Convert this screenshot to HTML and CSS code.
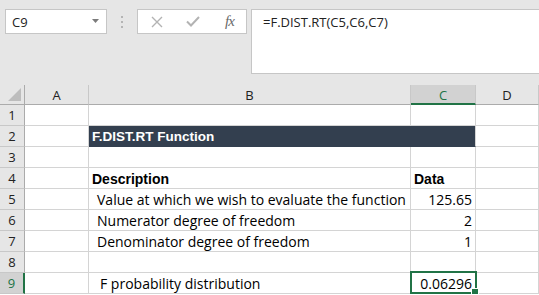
FILE: index.html
```html
<!DOCTYPE html>
<html lang="en">
<head>
    <meta charset="UTF-8">
    <title>F.DIST.RT Function</title>
    <link rel="stylesheet" href="styles.css">
</head>
<body>
    <div class="toolbar">
        <div class="name-box">
            <span>C9</span>
            <svg width="8" height="5" viewBox="0 0 8 5"><path d="M0 0h7L3.5 4z" fill="#7b7b7b"/></svg>
        </div>
        <div class="grip">
            <svg width="3" height="12" viewBox="0 0 3 12"><rect x="0" y="0" width="2" height="2" fill="#b4b4b4"/><rect x="0" y="5" width="2" height="2" fill="#b4b4b4"/><rect x="0" y="10" width="2" height="2" fill="#b4b4b4"/></svg>
        </div>
        <div class="fx-box">
            <svg class="icon" width="12" height="12" viewBox="0 0 12 12"><path d="M1 1l10 10M11 1L1 11" stroke="#b3b3b3" stroke-width="1.4" fill="none"/></svg>
            <svg class="icon" width="14" height="11" viewBox="0 0 14 11"><path d="M1 5.5l4 4L13 1" stroke="#b3b3b3" stroke-width="2" fill="none"/></svg>
            <span class="fx">fx</span>
        </div>
        <div class="formula">=F.DIST.RT(C5,C6,C7)</div>
    </div>

    <div class="sheet">
        <div class="corner"><svg width="13" height="13" viewBox="0 0 13 13"><path d="M13 0V13H0z" fill="#bdbdbd"/></svg></div>
        <div class="col-head">A</div>
        <div class="col-head">B</div>
        <div class="col-head active">C</div>
        <div class="col-head">D</div>

        <div class="row-head">1</div>
        <div class="cell"></div><div class="cell"></div><div class="cell"></div><div class="cell"></div>

        <div class="row-head">2</div>
        <div class="cell"></div>
        <div class="cell title">F.DIST.RT Function</div>
        <div class="cell"></div>

        <div class="row-head">3</div>
        <div class="cell"></div><div class="cell"></div><div class="cell"></div><div class="cell"></div>

        <div class="row-head">4</div>
        <div class="cell"></div>
        <div class="cell bold">Description</div>
        <div class="cell bold">Data</div>
        <div class="cell"></div>

        <div class="row-head">5</div>
        <div class="cell"></div>
        <div class="cell indent">Value at which we wish to evaluate the function</div>
        <div class="cell num">125.65</div>
        <div class="cell"></div>

        <div class="row-head">6</div>
        <div class="cell"></div>
        <div class="cell indent">Numerator degree of freedom</div>
        <div class="cell num">2</div>
        <div class="cell"></div>

        <div class="row-head">7</div>
        <div class="cell"></div>
        <div class="cell indent">Denominator degree of freedom</div>
        <div class="cell num">1</div>
        <div class="cell"></div>

        <div class="row-head">8</div>
        <div class="cell"></div><div class="cell"></div><div class="cell"></div><div class="cell"></div>

        <div class="row-head active">9</div>
        <div class="cell"></div>
        <div class="cell indent-more">F probability distribution</div>
        <div class="cell num selected">0.06296</div>
        <div class="cell"></div>
    </div>
</body>
</html>
```

FILE: styles.css
```css
:root {
    --chrome: #e6e6e6;
    --grid: #d4d4d4;
    --head-line: #ababab;
    --green: #217346;
    --band: #333f4f;
    --text: #000000;
}

* {
    margin: 0;
    padding: 0;
    box-sizing: border-box;
}

body {
    background-color: #ffffff;
    font-family: 'Open Sans', Arial, sans-serif;
    color: var(--text);
    overflow: hidden;
}

/* formula bar area */

.toolbar {
    background-color: var(--chrome);
    height: 85px;
    display: flex;
    align-items: flex-start;
    padding: 9px 0 0 5px;
}

.name-box {
    width: 102px;
    height: 25px;
    background-color: #ffffff;
    border: 1px solid #c6c6c6;
    display: flex;
    align-items: center;
    justify-content: space-between;
    padding: 0 6px 0 6px;
    font-size: 13px;
    color: #222;
}

.grip {
    width: 30px;
    height: 25px;
    display: flex;
    align-items: center;
    justify-content: center;
}

.fx-box {
    width: 110px;
    height: 25px;
    background-color: #ffffff;
    border: 1px solid #c6c6c6;
    display: flex;
    align-items: center;
    padding-left: 13px;
    gap: 23px;
}

.fx {
    font-family: 'Liberation Serif', serif;
    font-style: italic;
    font-size: 15px;
    color: #6a6a6a;
    letter-spacing: -1px;
    margin-left: 2px;
}

.formula {
    flex: 1;
    margin-left: 4px;
    height: 65px;
    background-color: #ffffff;
    border: 1px solid #c6c6c6;
    border-right: none;
    padding: 3px 0 0 11px;
    font-size: 13px;
    color: #222;
}

/* worksheet grid */

.sheet {
    display: grid;
    grid-template-columns: 25px 64px 322px 65px 1fr;
    grid-template-rows: 20px repeat(9, 21px);
}

.corner,
.col-head,
.row-head {
    background-color: var(--chrome);
    font-size: 13px;
    color: #222;
    display: flex;
    align-items: center;
    justify-content: center;
}

.corner {
    border-right: 1px solid var(--head-line);
    border-bottom: 1px solid var(--head-line);
    align-items: flex-end;
    justify-content: flex-end;
    padding: 0 3px 3px 0;
}

.col-head {
    border-right: 1px solid #c8c8c8;
    border-bottom: 1px solid var(--head-line);
    padding-top: 1px;
}

.col-head.active {
    background-color: #d2d2d2;
    color: var(--green);
    border-bottom: 2px solid var(--green);
}

.row-head {
    border-right: 1px solid var(--head-line);
    border-bottom: 1px solid #c8c8c8;
}

.row-head.active {
    background-color: #d2d2d2;
    color: var(--green);
    border-right: 2px solid var(--green);
}

.cell {
    border-right: 1px solid var(--grid);
    border-bottom: 1px solid var(--grid);
    font-size: 14px;
    white-space: nowrap;
    display: flex;
    align-items: center;
    padding: 1px 3px 0;
    position: relative;
}

.title {
    grid-column: span 2;
    background-color: var(--band);
    border-color: var(--band);
    border-right-color: var(--grid);
    color: #ffffff;
    font-family: 'Liberation Sans', Arial, sans-serif;
    font-weight: 700;
    font-size: 13.5px;
}

.bold {
    font-family: 'Liberation Sans', Arial, sans-serif;
    font-weight: 700;
    font-size: 14px;
}

.indent {
    padding-left: 8px;
}

.indent-more {
    padding-left: 11px;
}

.num {
    justify-content: flex-end;
}

.selected::after {
    content: '';
    position: absolute;
    top: -2px;
    left: -1px;
    right: -2px;
    bottom: -1px;
    border: 2px solid var(--green);
}

.selected::before {
    content: '';
    position: absolute;
    right: -4px;
    bottom: -3px;
    width: 6px;
    height: 6px;
    background-color: var(--green);
    border: 1px solid #ffffff;
    z-index: 1;
}
```
